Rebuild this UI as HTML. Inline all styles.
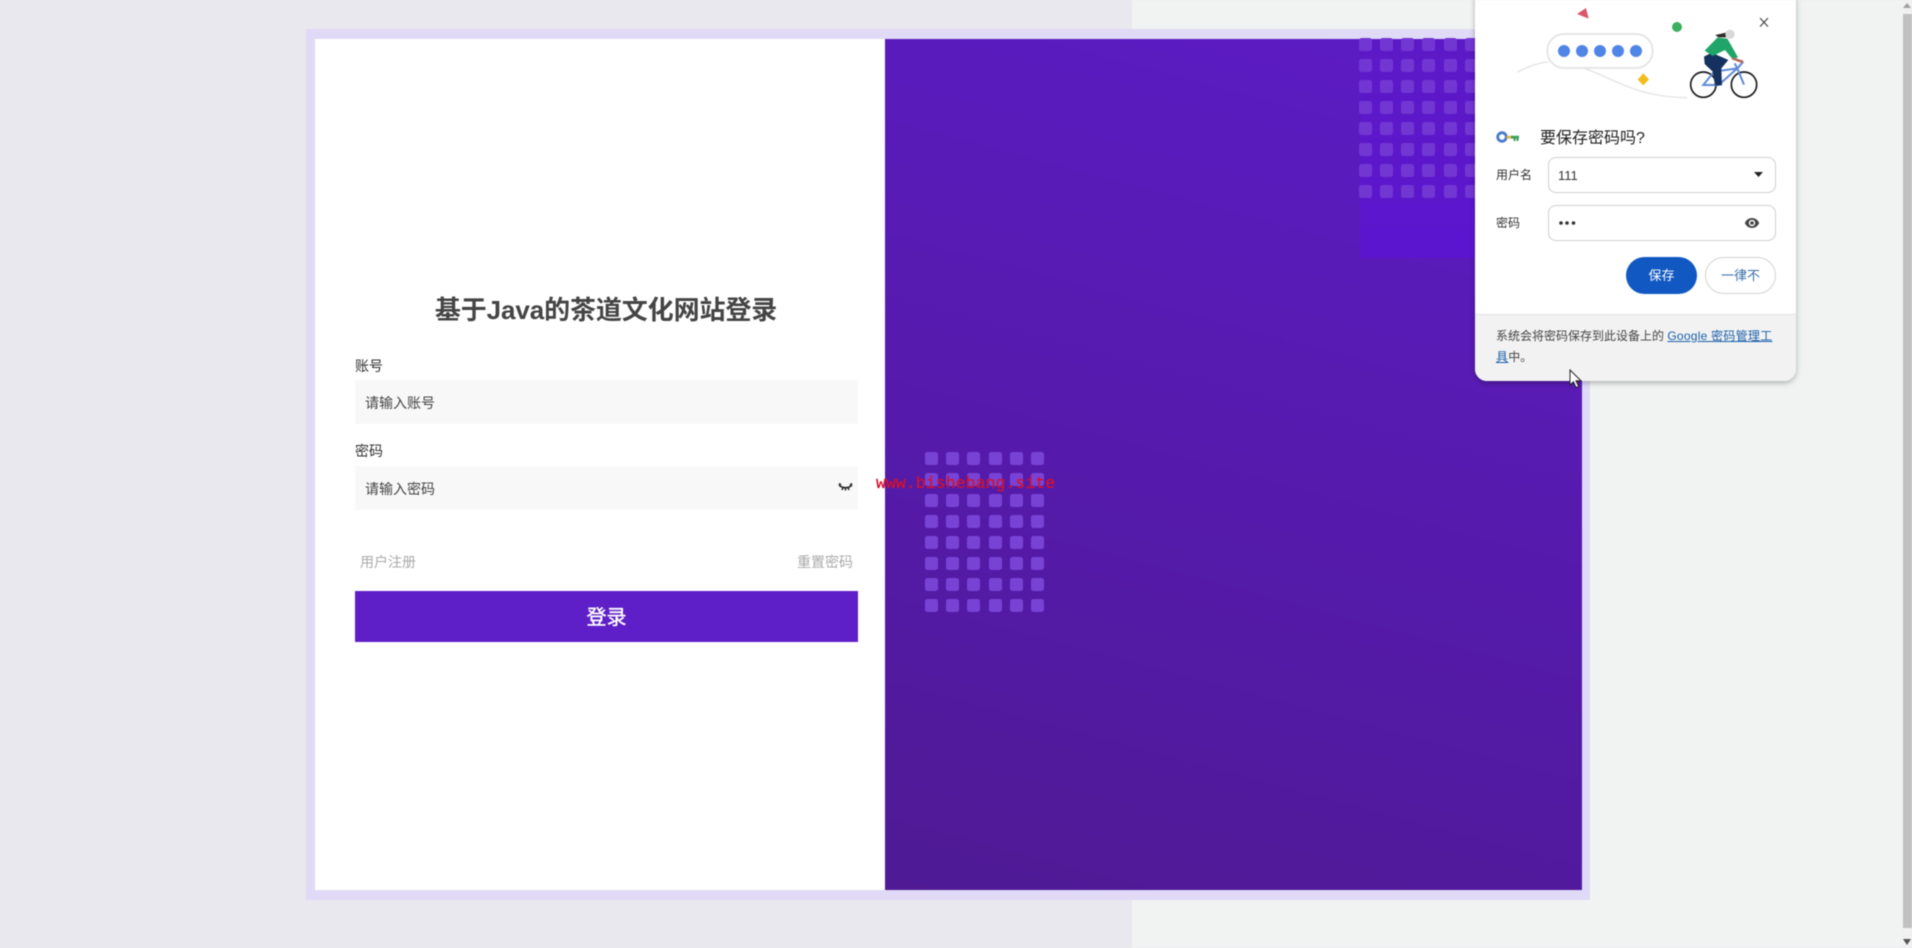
<!DOCTYPE html>
<html lang="zh"><head><meta charset="utf-8"><title>登录</title>
<style>
*{box-sizing:border-box}
html,body{margin:0;padding:0;width:1912px;height:948px;overflow:hidden;background:#e9e8ee;font-family:"Liberation Sans","Noto Sans CJK SC",sans-serif}
#w{position:absolute;left:0;top:0;width:1912px;height:948px;overflow:hidden;filter:blur(.45px)}
.abs,.abs *{position:absolute}
.t{white-space:nowrap;line-height:1}
.sq{width:13px;height:13px;border-radius:2.500px;background:#7843d5}
</style></head><body><div id="w">
<div class="abs" style="left:1132px;top:0;width:780px;height:948px;background:#f0f3f2"></div>
<!-- scrollbar -->
<div class="abs" style="left:1902px;top:0;width:10px;height:948px;background:#f1f1f1"></div>
<div class="abs" style="left:1903px;top:14px;width:9px;height:914px;background:#c1c1c1"></div>
<svg class="abs" style="position:absolute;left:1902px;top:0" width="10" height="948"><path d="M5 3l4 5H1z" fill="#a0a0a0"/><path d="M1 939h8l-4 6z" fill="#555"/></svg>
<!-- frame -->
<div class="abs" style="left:306px;top:29px;width:1284px;height:871px;background:#e0daf6"></div>
<div class="abs" style="left:315px;top:39px;width:570px;height:851px;background:#fff"></div>
<div class="abs" style="left:885px;top:39px;width:697px;height:851px;background:linear-gradient(195deg,#5c1cc6 0%,#581bb4 35%,#531aa4 70%,#4f1a94 100%)"></div>
<div class="abs" style="left:1360px;top:39px;width:222px;height:219px;background:linear-gradient(180deg,#5c1ac6,#5c15cf)"></div>
<!-- squares -->
<div id="a" class="abs" style="left:0;top:0">
<script>
(function(){var h='';
var xs=[931,952,973,995,1016,1037],ys=[458,479,500,521,542,563,584,605];
ys.forEach(function(y){xs.forEach(function(x){h+='<div class="sq" style="left:'+(x-6)+'px;top:'+(y-6)+'px"></div>'})});
var xs2=[1365,1386,1407,1428,1450,1471],ys2=[44,65,86,107,128,149,170,191];
ys2.forEach(function(y){xs2.forEach(function(x){h+='<div class="sq" style="background:#7236d3;left:'+(x-6)+'px;top:'+(y-6)+'px"></div>'})});
document.getElementById('a').innerHTML=h;})();
</script>
</div>
<!-- form -->
<div class="abs t" style="left:315px;width:582px;top:297px;text-align:center;font-size:26px;font-weight:bold;color:#444;letter-spacing:-.1px">基于Java的茶道文化网站登录</div>
<div class="abs t" style="left:355px;top:359px;font-size:14px;color:#333">账号</div>
<div class="abs" style="left:355px;top:380px;width:503px;height:44px;background:#f8f8f8"></div>
<div class="abs t" style="left:365px;top:396px;font-size:14px;color:#444">请输入账号</div>
<div class="abs t" style="left:355px;top:444px;font-size:14px;color:#333">密码</div>
<div class="abs" style="left:355px;top:466px;width:503px;height:44px;background:#f8f8f8"></div>
<div class="abs t" style="left:365px;top:482px;font-size:14px;color:#444">请输入密码</div>
<svg class="abs" style="position:absolute;left:838px;top:482px" width="15" height="12" viewBox="0 0 15 12"><path d="M1 3c3 3.500 10 3.500 13 0M3 3L1 1.500M12 3l2-1.500M5 5.500L4 8M10 5.500l1 2.500M7.500 6v2.500" fill="none" stroke="#222" stroke-width="1.500"/></svg>
<div class="abs t" style="left:360px;top:555px;font-size:14px;color:#aaa">用户注册</div>
<div class="abs t" style="left:797px;top:555px;font-size:14px;color:#aaa">重置密码</div>
<div class="abs" style="left:355px;top:591px;width:503px;height:51px;background:#5e1ec8"></div>
<div class="abs t" style="left:355px;width:503px;top:608px;text-align:center;font-size:20px;color:#fff;-webkit-text-stroke:.4px #fff">登录</div>
<!-- watermark -->
<div class="abs t" style="left:876px;top:476px;font-family:'Liberation Mono','Noto Sans CJK SC',monospace;font-size:16.6px;color:#d3122f;-webkit-text-stroke:.3px #d3122f">www.bishebang.site</div>
<!-- popup -->
<div class="abs" style="left:1475px;top:-10px;width:321px;height:391px;background:#fff;border-radius:0 0 12px 12px;box-shadow:0 2px 6px rgba(0,0,0,.28);overflow:hidden">
<div style="left:0;top:324px;width:321px;height:67px;background:#f2f2f2;border-top:1px solid #e2e2e2"></div>
</div>
<svg class="abs" style="position:absolute;left:1480px;top:0" width="300" height="110" viewBox="0 0 900 330">
<path d="M112 216C150 198 175 188 205 186" fill="none" stroke="#e3e3e3" stroke-width="4"/>
<path d="M315 206C400 235 470 292 622 293" fill="none" stroke="#e3e3e3" stroke-width="4"/>
<rect x="202" y="102" width="316" height="102" rx="50" fill="#fff" stroke="#e3e3e3" stroke-width="5"/>
<g fill="#5085e8"><circle cx="252" cy="153" r="18"/><circle cx="306" cy="153" r="18"/><circle cx="360" cy="153" r="18"/><circle cx="414" cy="153" r="18"/><circle cx="468" cy="153" r="18"/></g>
<path d="M291 42L318 24L326 56Z" fill="#d9566b"/>
<circle cx="591" cy="81" r="15" fill="#3cb05e"/>
<path d="M490 220l17 18-17 18-17-17z" fill="#f2bd1c"/>
<circle cx="670" cy="254" r="38" fill="none" stroke="#1c1c1c" stroke-width="5"/>
<circle cx="792" cy="254" r="38" fill="none" stroke="#1c1c1c" stroke-width="5"/>
<path d="M670 255L702 215L772 205L716 255ZM772 205L792 254M764 190L772 205L790 185" fill="none" stroke="#5f8ad8" stroke-width="6"/>
<path d="M672 170L695 158L745 180L724 205L726 256L705 256L698 215L674 192Z" fill="#15315f"/>
<path d="M674 152L712 113L742 116L774 172L758 178L735 150L698 168Z" fill="#1fa567"/>
<path d="M758 172L790 182L788 190L755 178Z" fill="#b9665b"/>
<path d="M706 105L738 98L738 112L715 112Z" fill="#2b2b2b"/>
<circle cx="750" cy="103" r="14" fill="#d9d9d9"/>
<path d="M840 54L864 80M864 54L840 80" stroke="#444" stroke-width="3.500" fill="none"/>
</svg>
<!-- key icon -->
<svg class="abs" style="position:absolute;left:1496px;top:130px" width="24" height="14" viewBox="0 0 24 14">
<circle cx="6" cy="7" r="4.300" fill="none" stroke="#4c78d0" stroke-width="2.800"/>
<rect x="10.500" y="5.800" width="5" height="2.800" fill="#e2b53a"/>
<path d="M15 5.800h8v2.800h-.5V11h-2V8.600h-1V11h-2V8.600H15z" fill="#3f9e5c"/>
</svg>
<div class="abs t" style="left:1540px;top:131px;font-size:16px;color:#222">要保存密码吗?</div>
<div class="abs t" style="left:1496px;top:169px;font-size:12px;color:#333">用户名</div>
<div class="abs" style="left:1548px;top:157px;width:228px;height:36px;border:1px solid #d0d0d0;border-radius:8px;background:#fff"></div>
<div class="abs t" style="left:1558px;top:169px;font-size:13px;color:#333">111</div>
<svg class="abs" style="position:absolute;left:1753px;top:171px" width="12" height="7"><path d="M1 1h9L5.500 6z" fill="#222"/></svg>
<div class="abs t" style="left:1496px;top:217px;font-size:12px;color:#333">密码</div>
<div class="abs" style="left:1548px;top:205px;width:228px;height:36px;border:1px solid #d0d0d0;border-radius:8px;background:#fff"></div>
<svg class="abs" style="position:absolute;left:1558px;top:220px" width="20" height="6"><g fill="#333"><circle cx="3" cy="3" r="1.800"/><circle cx="9" cy="3" r="1.800"/><circle cx="15.500" cy="3" r="1.800"/></g></svg>
<svg class="abs" style="position:absolute;left:1744px;top:215px" width="16" height="16" viewBox="0 0 16 16"><path d="M.8 8C2.300 4.800 5 3 8 3s5.700 1.800 7.200 5c-1.500 3.200-4.200 5-7.200 5S2.300 11.200.8 8z" fill="#444"/><circle cx="8" cy="8" r="3.200" fill="#fff"/><circle cx="8" cy="8" r="1.800" fill="#444"/></svg>
<div class="abs" style="left:1626px;top:257px;width:71px;height:37px;border-radius:19px;background:#1258c2"></div>
<div class="abs t" style="left:1626px;width:71px;top:269px;text-align:center;font-size:13px;color:#fff">保存</div>
<div class="abs" style="left:1705px;top:257px;width:71px;height:37px;border-radius:19px;border:1px solid #d5d5d5;background:#fff"></div>
<div class="abs t" style="left:1705px;width:71px;top:269px;text-align:center;font-size:13px;color:#3a6ea8">一律不</div>
<div class="abs" style="left:1496px;top:326px;width:280px;font-size:12px;line-height:20.500px;color:#444">系统会将密码保存到此设备上的 <u style="position:static;color:#1a5fa8;letter-spacing:.25px">Google 密码管理工具</u>中。</div>
<!-- cursor -->
<svg class="abs" style="position:absolute;left:1569px;top:369px" width="14" height="20" viewBox="0 0 14 20"><path d="M1 1v15l3.500-3.300L7 18.500l2.600-1.100L7 11.800h5z" fill="#fff" stroke="#222" stroke-width="1"/></svg>
</div></body></html>
